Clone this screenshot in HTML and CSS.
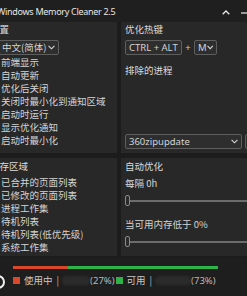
FILE: index.html
```html
<!DOCTYPE html>
<html>
<head>
<meta charset="utf-8">
<link rel="stylesheet" href="styles.css">
</head>
<body>
<div class="window">
  <div class="titlebar">
    <span class="title">Windows Memory Cleaner 2.5</span>
    <span class="controls">
      <svg class="ctl-up" width="8" height="5" viewBox="0 0 8 5"><path d="M0.7 4.3 L4 1 L7.3 4.3" fill="none" stroke="#e8e8e8" stroke-width="1.3"/></svg>
      <svg class="ctl-min" width="9" height="2" viewBox="0 0 9 2"><path d="M0 1 H9" stroke="#e8e8e8" stroke-width="1.2"/></svg>
    </span>
  </div>
  <div class="grid">
    <section class="panel p-settings">
      <div class="head">设置</div>
      <div class="select lang"><span>中文(简体)</span><svg class="chev" width="7" height="5" viewBox="0 0 7 5"><path d="M0.6 0.8 L3.5 3.8 L6.4 0.8" fill="none" stroke="#d8d8d8" stroke-width="1.1"/></svg></div>
      <ul class="checks">
        <li><i class="box"></i>前端显示</li>
        <li><i class="box"></i>自动更新</li>
        <li><i class="box"></i>优化后关闭</li>
        <li><i class="box"></i>关闭时最小化到通知区域</li>
        <li><i class="box"></i>启动时运行</li>
        <li><i class="box"></i>显示优化通知</li>
        <li><i class="box"></i>启动时最小化</li>
      </ul>
    </section>
    <section class="panel p-right-top">
      <div class="head">优化热键</div>
      <div class="hotkeys">
        <div class="select key-mod"><span>CTRL + ALT</span><svg class="chev" width="7" height="5" viewBox="0 0 7 5"><path d="M0.6 0.8 L3.5 3.8 L6.4 0.8" fill="none" stroke="#d8d8d8" stroke-width="1.1"/></svg></div>
        <span class="plus">+</span>
        <div class="select key-m"><span>M</span><svg class="chev" width="7" height="5" viewBox="0 0 7 5"><path d="M0.6 0.8 L3.5 3.8 L6.4 0.8" fill="none" stroke="#d8d8d8" stroke-width="1.1"/></svg></div>
      </div>
      <div class="head head2">排除的进程</div>
      <div class="proc-list"></div>
      <div class="proc-row">
        <div class="select proc"><span>360zipupdate</span><svg class="chev" width="7" height="5" viewBox="0 0 7 5"><path d="M0.6 0.8 L3.5 3.8 L6.4 0.8" fill="none" stroke="#d8d8d8" stroke-width="1.1"/></svg></div>
        <div class="btn-add"></div>
      </div>
    </section>
    <section class="panel p-areas">
      <div class="head">内存区域</div>
      <ul class="checks">
        <li><i class="box"></i>已合并的页面列表</li>
        <li><i class="box"></i>已修改的页面列表</li>
        <li><i class="box"></i>进程工作集</li>
        <li><i class="box"></i>待机列表</li>
        <li><i class="box"></i>待机列表(低优先级)</li>
        <li><i class="box"></i>系统工作集</li>
      </ul>
    </section>
    <section class="panel p-auto">
      <div class="head">自动优化</div>
      <div class="label l1">每隔 0h</div>
      <div class="slider"><i class="thumb"></i><i class="track"></i></div>
      <div class="label l2">当可用内存低于 0%</div>
      <div class="slider s2"><i class="thumb"></i><i class="track"></i></div>
    </section>
  </div>
  <div class="statusbar">
    <i class="logo"></i>
    <div class="usage">
      <div class="bar"><i class="used" style="width:27%"></i><i class="free" style="width:73%"></i></div>
      <div class="legend">
        <span class="item"><i class="sq red"></i>使用中<span class="sep">|</span><i class="blur b1"></i><span class="pct">(27%)</span></span>
        <span class="item i2"><i class="sq green"></i>可用<span class="sep">|</span><i class="blur b2"></i><span class="pct">(73%)</span></span>
      </div>
    </div>
  </div>
</div>
</body>
</html>
```
FILE: styles.css
```css
html, body {
  margin: 0;
  padding: 0;
  background: #1c1c1c;
  overflow: hidden;
}
body {
  width: 247px;
  height: 296px;
  font-family: "Noto Sans CJK SC", "Noto Sans", sans-serif;
  font-size: 9.5px;
  color: #d4d4d4;
}
.window {
  margin-left: -14px;
  width: 300px;
}
.titlebar {
  height: 22px;
  background: #1f1f1f;
  display: flex;
  align-items: center;
  position: relative;
}
.title {
  margin-left: 11px;
  font-family: "Noto Sans", sans-serif;
  font-size: 9px;
  color: #e6e6e6;
  letter-spacing: -0.3px;
}
.controls {
  position: absolute;
  left: 236px;
  top: 10px;
  display: flex;
  align-items: center;
  gap: 11px;
}
.grid {
  display: grid;
  grid-template-columns: 131px 166px;
  grid-template-rows: 131px 98px;
  column-gap: 4px;
  row-gap: 5px;
}
.panel {
  background: #282828;
  padding: 0 4px;
}
.head {
  height: 14px;
  line-height: 14px;
  color: #dcdcdc;
}
.select {
  box-sizing: border-box;
  height: 15px;
  border: 1px solid #5e5e5e;
  background: #2e2e2e;
  border-radius: 2px;
  display: flex;
  align-items: center;
  justify-content: space-between;
  padding: 0 3px;
  line-height: 13px;
}
.select span { white-space: nowrap; }
.lang {
  margin-top: 4px;
  margin-left: 8px;
  width: 61px;
}
.checks {
  list-style: none;
  margin: 1px 0 0;
  padding: 0;
}
.checks li {
  height: 13px;
  line-height: 13px;
  display: flex;
  align-items: center;
  white-space: nowrap;
}
.box {
  width: 8px;
  height: 8px;
  border: 1px solid #777;
  flex: none;
  margin-left: -1px;
  margin-right: 2px;
}
.hotkeys {
  margin-top: 4px;
  display: flex;
  align-items: center;
}
.key-mod { width: 57px; font-family: "Noto Sans", sans-serif; }
.plus { width: 12px; text-align: center; font-family: "Noto Sans", sans-serif; color: #cfcfcf; }
.key-m { width: 23px; font-family: "Noto Sans", sans-serif; }
.head2 { margin-top: 8px; }
.proc-list { height: 57px; }
.proc-row { display: flex; gap: 3px; }
.proc { width: 117px; font-family: "Noto Sans", sans-serif; }
.btn-add {
  width: 20px;
  height: 15px;
  box-sizing: border-box;
  border: 1px solid #5e5e5e;
  border-radius: 2px;
  background: #2e2e2e;
}
.p-areas .head, .p-auto .head { margin-top: 1px; }
.p-areas .checks { margin-top: 3px; }
.label { height: 13px; line-height: 13px; white-space: nowrap; }
.l1 { margin-top: 4px; }
.slider {
  margin-top: 5px;
  height: 11px;
  display: flex;
  align-items: center;
}
.thumb {
  box-sizing: border-box;
  width: 5px;
  height: 11px;
  border: 1px solid #8a8a8a;
  border-radius: 2px;
  background: #2a2a2a;
  flex: none;
}
.track {
  flex: 1;
  height: 2px;
  background: #6c6c6c;
}
.l2 { margin-top: 12px; }
.s2 { margin-top: 5px; }
.statusbar {
  margin-top: 2px;
  height: 40px;
  background: #1e1e1e;
  display: flex;
  position: relative;
}
.logo {
  position: absolute;
  left: 5px;
  top: 17px;
  width: 10px;
  height: 10px;
  border: 2px solid #f0f0f0;
  border-radius: 50%;
}
.usage {
  margin-left: 27px;
  width: 205px;
  padding-top: 8px;
}
.bar {
  display: flex;
  height: 3px;
}
.bar .used { background: #d9482b; height: 3px; }
.bar .free { background: #2db34a; height: 3px; }
.legend {
  margin-top: 5px;
  display: flex;
  height: 13px;
  line-height: 13px;
  color: #c9c9c9;
}
.item { display: flex; align-items: center; white-space: nowrap; width: 111px; }
.sq { width: 7px; height: 7px; margin-right: 4px; flex: none; }
.red { background: #d9482b; }
.green { background: #2db34a; }
.sep { margin: 0 3px 0 4px; color: #bdbdbd; }
.blur {
  height: 9px;
  background: #2b2b2b;
  border-radius: 4px;
  filter: blur(1px);
}
.b1 { width: 28px; }
.b2 { width: 36px; }
.pct { font-family: "Noto Sans", sans-serif; color: #bbbbbb; }
```
